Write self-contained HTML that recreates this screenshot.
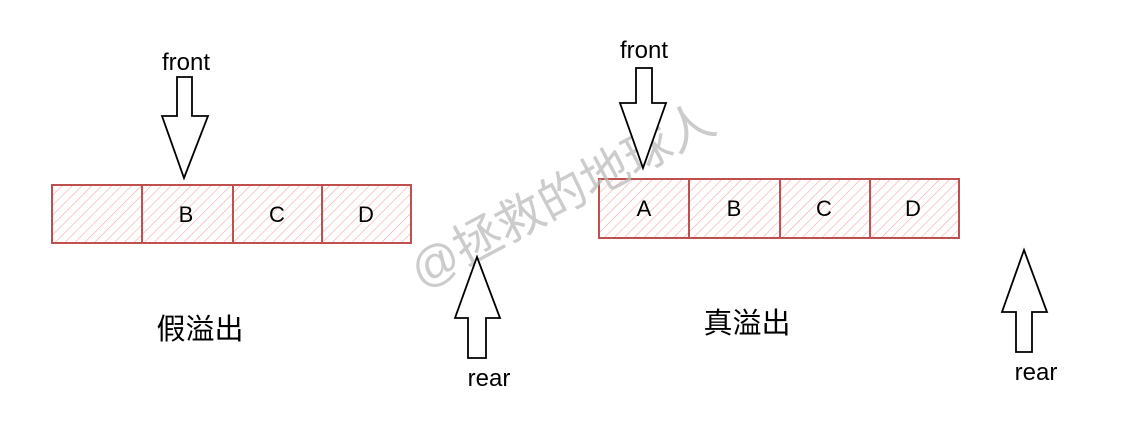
<!DOCTYPE html>
<html><head><meta charset="utf-8"><style>
html,body{margin:0;padding:0;background:#fff;width:1126px;height:445px;overflow:hidden}
text{font-family:"Comic Sans MS","Liberation Sans",sans-serif}
</style></head><body>
<svg width="1126" height="445" viewBox="0 0 1126 445" xmlns="http://www.w3.org/2000/svg">
<defs>
<pattern id="h" width="7" height="7" patternUnits="userSpaceOnUse" patternTransform="rotate(45)">
<line x1="0" y1="0" x2="0" y2="7" stroke="#f4a8a8" stroke-width="1.2"/>
</pattern>
</defs>
<rect x="52" y="185" width="359" height="58" fill="url(#h)" stroke="#c0504d" stroke-width="2"/>
<g stroke="#c0504d" stroke-width="2"><line x1="142" y1="185" x2="142" y2="243"/><line x1="233" y1="185" x2="233" y2="243"/><line x1="322" y1="185" x2="322" y2="243"/></g>
<rect x="599" y="179" width="360" height="59" fill="url(#h)" stroke="#c0504d" stroke-width="2"/>
<g stroke="#c0504d" stroke-width="2"><line x1="689" y1="179" x2="689" y2="238"/><line x1="780" y1="179" x2="780" y2="238"/><line x1="870" y1="179" x2="870" y2="238"/></g>
<g font-size="22" fill="#000" text-anchor="middle">
<text x="186" y="222">B</text><text x="277" y="222">C</text><text x="366" y="222">D</text>
<text x="644" y="216">A</text><text x="734" y="216">B</text><text x="824" y="216">C</text><text x="913" y="216">D</text>
</g>
<text x="562" y="212" font-size="48" fill="#bbb" opacity="0.75" text-anchor="middle" transform="rotate(-28 562 195)" style='font-family:"Liberation Sans","Noto Sans CJK SC",sans-serif'>@拯救的地球人</text>
<g fill="#fff" stroke="#000" stroke-width="1.8" stroke-linejoin="miter">
<path d="M177 77 L192 77 L192 116 L208 116 L184 178 L162 116 L177 116 Z"/>
<path d="M636 68 L652 68 L652 103 L666 103 L643 168 L620 103 L636 103 Z"/>
<path d="M477 257 L500 318 L486 318 L486 358 L468 358 L468 318 L455 318 Z"/>
<path d="M1024 250 L1047 312 L1032 312 L1032 352 L1016 352 L1016 312 L1002 312 Z"/>
</g>
<g font-size="24" fill="#000" text-anchor="middle">
<text x="186" y="70">front</text>
<text x="644" y="58">front</text>
<text x="489" y="386">rear</text>
<text x="1036" y="380">rear</text>
</g>
<g font-size="29" fill="#000" text-anchor="middle" style='font-family:"Liberation Sans","Noto Sans CJK SC",sans-serif'>
<text x="200" y="339">假溢出</text>
<text x="747" y="333">真溢出</text>
</g>
</svg>
</body></html>
